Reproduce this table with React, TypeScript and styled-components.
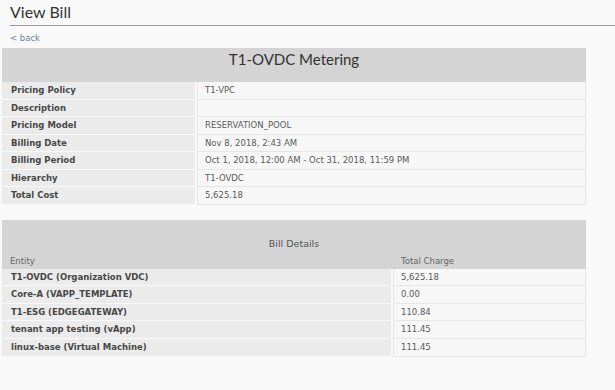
import styled, { createGlobalStyle } from 'styled-components';

const GlobalStyle = createGlobalStyle`
  html, body {
    margin: 0;
    padding: 0;
    background: #f9f9f9;
    font-family: "DejaVu Sans", "Liberation Sans", sans-serif;
    color: #444;
  }
`;

const Page = styled.div`
  padding: 3px 0 0 2px;
  width: 613px;
  height: 387px;
  overflow: hidden;
`;

const Title = styled.h1`
  margin: 0 0 0 8px;
  padding-bottom: 4px;
  font-family: Lato, "Liberation Sans", sans-serif;
  font-size: 16px;
  font-weight: 400;
  color: #333;
  line-height: 18px;
  border-bottom: 1px solid #9a9a9a;
`;

const BackLink = styled.a`
  display: block;
  margin: 6px 0 0 8px;
  font-size: 8.5px;
  line-height: 12px;
  color: #6b84a6;
  text-decoration: none;
`;

const Panel = styled.div<{ $gap?: number }>`
  width: 584px;
  margin-top: ${(p) => p.$gap ?? 0}px;
`;

const Header = styled.div<{ $height: number }>`
  background: #d4d4d4;
  height: ${(p) => p.$height}px;
  display: flex;
  flex-direction: column;
`;

const MainHeading = styled.div`
  text-align: center;
  font-family: Lato, "Liberation Sans", sans-serif;
  font-size: 15px;
  color: #333;
  padding-top: 2px;
  line-height: 18px;
`;

const SubHeading = styled.div`
  text-align: center;
  font-size: 9.5px;
  color: #555;
  padding-top: 17px;
  line-height: 14px;
`;

const ColumnHeads = styled.div`
  display: grid;
  grid-template-columns: 391px 1fr;
  margin-top: auto;
  padding-bottom: 1px;
  font-size: 8.5px;
  color: #666;
  line-height: 13px;
`;

const ColHead = styled.div`
  padding-left: 8px;
`;

const Row = styled.div<{ $split: number }>`
  display: grid;
  grid-template-columns: ${(p) => p.$split}px 1fr;
  height: 17.55px;
  column-gap: 2px;
  font-size: 8.5px;
  line-height: 16px;
`;

const Label = styled.div`
  background: #ebebeb;
  font-weight: 700;
  color: #464646;
  padding-left: 9px;
  border-bottom: 1.5px solid #f9f9f9;
  white-space: nowrap;
`;

const Value = styled.div`
  background: #f7f7f7;
  color: #5a5a5a;
  padding-left: 7px;
  border: 1px solid #e6e6e6;
  border-top: none;
  white-space: nowrap;
`;

const summary: [string, string][] = [
  ['Pricing Policy', 'T1-VPC'],
  ['Description', ''],
  ['Pricing Model', 'RESERVATION_POOL'],
  ['Billing Date', 'Nov 8, 2018, 2:43 AM'],
  ['Billing Period', 'Oct 1, 2018, 12:00 AM - Oct 31, 2018, 11:59 PM'],
  ['Hierarchy', 'T1-OVDC'],
  ['Total Cost', '5,625.18'],
];

const details: [string, string][] = [
  ['T1-OVDC (Organization VDC)', '5,625.18'],
  ['Core-A (VAPP_TEMPLATE)', '0.00'],
  ['T1-ESG (EDGEGATEWAY)', '110.84'],
  ['tenant app testing (vApp)', '111.45'],
  ['linux-base (Virtual Machine)', '111.45'],
];

export default function App() {
  return (
    <Page>
      <GlobalStyle />
      <Title>View Bill</Title>
      <BackLink href="#">&lt; back</BackLink>

      <Panel $gap={4}>
        <Header $height={34}>
          <MainHeading>T1-OVDC Metering</MainHeading>
        </Header>
        {summary.map(([k, v]) => (
          <Row key={k} $split={193}>
            <Label>{k}</Label>
            <Value>{v}</Value>
          </Row>
        ))}
      </Panel>

      <Panel $gap={15}>
        <Header $height={49}>
          <SubHeading>Bill Details</SubHeading>
          <ColumnHeads>
            <ColHead>Entity</ColHead>
            <ColHead>Total Charge</ColHead>
          </ColumnHeads>
        </Header>
        {details.map(([k, v]) => (
          <Row key={k} $split={389}>
            <Label>{k}</Label>
            <Value>{v}</Value>
          </Row>
        ))}
      </Panel>
    </Page>
  );
}
